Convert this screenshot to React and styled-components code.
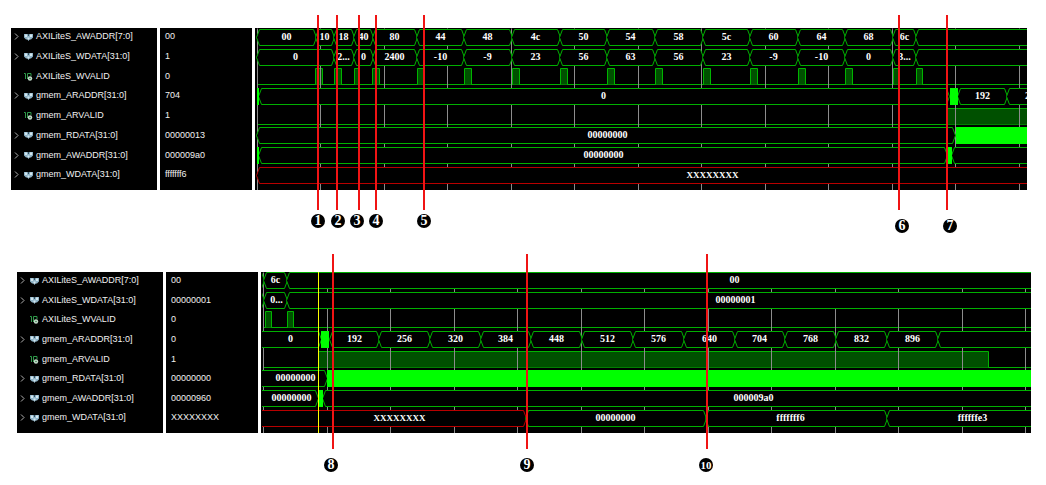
import React from "react";
import styled, { createGlobalStyle } from "styled-components";

const GlobalStyle = createGlobalStyle`
  body { margin: 0; background: #fff; }
  * { box-sizing: border-box; }
`;

const Page = styled.main`
  display: flex;
  flex-direction: column;
  gap: 82px;
  padding: 28px 0 52px;
  font-family: "Liberation Sans", Arial, sans-serif;
`;

const Viewer = styled.section`
  display: grid;
  grid-template-columns: 146px 92px 1fr;
  column-gap: 3px;
  height: ${(p) => p.$height}px;
  margin: 0 ${(p) => p.$right}px 0 ${(p) => p.$left}px;
`;

const Column = styled.ul`
  display: grid;
  grid-template-rows: repeat(8, 1fr);
  margin: 0;
  padding: 0 0 4px;
  list-style: none;
  background: #000;
  color: #f0f0f0;
  font-size: 9px;
  line-height: 17px;
  white-space: nowrap;
`;

const NameRow = styled.li`
  display: grid;
  grid-template-columns: 12px 12px 1fr;
  align-items: center;
  height: 17px;
  padding-left: 1px;
`;

const ValueRow = styled.li`
  height: 17px;
  padding-left: 5px;
`;

const Expander = styled.button`
  grid-column: 1;
  display: flex;
  justify-content: center;
  padding: 0 4px 0 0;
  border: 0;
  background: none;
`;

const Glyph = styled.span`
  grid-column: 2;
  display: flex;
`;

const Name = styled.span`
  grid-column: 3;
`;

const WavePane = styled.div`
  position: relative;
  min-width: 0;
  border-left: 1px solid #000;
  background: #000;
`;

const WaveSvg = styled.svg`
  display: block;
  width: 100%;
  height: 100%;
  font: bold 10px "Liberation Serif", "Times New Roman", serif;
  fill: #fff;
`;

const MarkerLine = styled.div`
  position: absolute;
  top: ${(p) => p.$top}px;
  left: ${(p) => p.$x}px;
  width: 2px;
  height: 195px;
  background: #f01414;
`;

const MarkerBadge = styled.span`
  position: absolute;
  top: ${(p) => p.$top}px;
  left: ${(p) => p.$x}px;
  width: 14px;
  height: 14px;
  border-radius: 50%;
  background: #000;
  color: #fff;
  font: bold ${(p) => (p.$small ? 11 : 14)}px/14px "Liberation Serif", serif;
  text-align: center;
`;

const GREEN = "#00b000";
const RED = "#b80000";
const BUS_HEIGHT = 16;

const signals = [
  { name: "AXILiteS_AWADDR[7:0]", bus: true },
  { name: "AXILiteS_WDATA[31:0]", bus: true },
  { name: "AXILiteS_WVALID" },
  { name: "gmem_ARADDR[31:0]", bus: true },
  { name: "gmem_ARVALID" },
  { name: "gmem_RDATA[31:0]", bus: true },
  { name: "gmem_AWADDR[31:0]", bus: true },
  { name: "gmem_WDATA[31:0]", bus: true },
];

const END = 4000;

/* Bus segment: [from, to, label, label centre, state] */
const steps = [160, 207, 255, 303, 350, 398, 446, 493, 541, 588, 636];
const run = (labels) => labels.map((l, i) => [steps[i], steps[i + 1], l]);

const writeTrace = {
  rowTop: 1,
  grid: [0, 63, 127, 190, 254, 317, 381, 444, 508, 571, 635, 698, 762],
  rows: [
    {
      bus: [
        [0, 59, "00"], [59, 77, "10"], [77, 97, "18"], [97, 116, "40"], [116, 160, "80"],
        ...run(["44", "48", "4c", "50", "54", "58", "5c", "60", "64", "68"]),
        [636, 659, "6c"], [659, END],
      ],
    },
    {
      bus: [
        [0, 77, "0"], [77, 97, "2..."], [97, 116, "0"], [116, 160, "2400"],
        ...run(["-10", "-9", "23", "56", "63", "56", "23", "-9", "-10", "0"]),
        [636, 659, "3..."], [659, END],
      ],
    },
    {
      pulses: [
        [58, 65], [77, 84], [97, 102], [115, 122], [160, 166],
        ...steps.slice(1, 10).map((x) => [x, x + 7]),
        [636, 641], [659, 665],
      ],
    },
    { bus: [[2, 692, "0", 347], [701, 750, "192"], [750, 801, "256"]], solid: [[0, 2], [693, 701]] },
    { pulses: [[690, END]] },
    { bus: [[0, 698, "00000000", 351]], solid: [[699, END]] },
    { bus: [[2, 690, "00000000", 347], [695, END]], solid: [[0, 2], [690, 695]] },
    { bus: [[0, END, "XXXXXXXX", 456, "unknown"]] },
  ],
};

const readTrace = {
  rowTop: 0,
  cursor: 55,
  grid: [0, 64, 127, 191, 254, 318, 381, 445, 508, 572, 635, 699, 762],
  rows: [
    { bus: [[-20, 1], [1, 24, "6c"], [24, END, "00", 472]] },
    { bus: [[-20, 1], [1, 24, "0...", 14], [24, END, "00000001", 473]] },
    { pulses: [[2, 8], [24, 30]] },
    {
      bus: [
        [-20, 58, "0", 28], [67, 116, "192"], [116, 167, "256"], [167, 218, "320"],
        [218, 268, "384"], [268, 319, "448"], [319, 370, "512"], [370, 421, "576"],
        [421, 472, "640"], [472, 522, "704"], [522, 573, "768"], [573, 624, "832"],
        [624, 675, "896"], [675, END],
      ],
      solid: [[58, 66]],
    },
    { pulses: [[55, 725]] },
    { bus: [[-20, 64, "00000000", 33]], solid: [[64, END]] },
    { bus: [[-20, 55, "00000000", 29], [60, END, "000009a0", 491]], solid: [[55, 60]] },
    {
      bus: [
        [-20, 263, "XXXXXXXX", 137, "unknown"], [263, 443, "00000000"],
        [443, 624, "fffffff6", 528], [624, END, "ffffffe3", 710],
      ],
    },
  ],
};

const writeMarkers = [
  { n: 1, x: 317, badge: 311, y: 214 },
  { n: 2, x: 336, badge: 331, y: 214 },
  { n: 3, x: 358, badge: 350, y: 214 },
  { n: 4, x: 375, badge: 369, y: 214 },
  { n: 5, x: 423, badge: 417, y: 214 },
  { n: 6, x: 898, badge: 895, y: 219 },
  { n: 7, x: 946, badge: 943, y: 219 },
];

const readMarkers = [
  { n: 8, x: 332, badge: 324, y: 458 },
  { n: 9, x: 526, badge: 520, y: 458 },
  { n: 10, x: 706, badge: 699, y: 458 },
];

function BusSegment({ segment, y }) {
  const [from, to, label, centre, state] = segment;
  const mid = y + BUS_HEIGHT / 2;
  const bottom = y + BUS_HEIGHT;
  const d = `M${from - 1} ${mid} L${from + 2} ${y} H${to - 3} L${to} ${mid} L${to - 3} ${bottom} H${from + 2} Z`;
  return (
    <g>
      <path d={d} fill="#000" stroke={state === "unknown" ? RED : GREEN} />
      {label && (
        <text
          x={(centre ?? Math.round((from + to) / 2)) - 1}
          y={mid + 2}
          textAnchor="middle"
          fontSize={state === "unknown" ? 9 : 10}
        >
          {label}
        </text>
      )}
    </g>
  );
}

function Pulse({ from, to, y }) {
  const bottom = y + BUS_HEIGHT;
  return (
    <g>
      <rect x={from} y={y} width={to - from} height={BUS_HEIGHT} fill="#005000" />
      <path d={`M${from} ${bottom} V${y} H${to} V${bottom}`} fill="none" stroke="#00b400" />
    </g>
  );
}

function Waves({ trace }) {
  const rowY = (i) => trace.rowTop + Math.round((i * 59) / 3);
  return (
    <WaveSvg aria-label="Waveforms">
      <g transform="translate(1.5 0.5)">
        {trace.rows.map((row, i) =>
          row.pulses ? (
            <g key={i}>
              <path d={`M0 ${rowY(i) + BUS_HEIGHT} H${END}`} stroke={GREEN} />
              {row.pulses.map(([a, b]) => (
                <Pulse key={a} from={a} to={b} y={rowY(i)} />
              ))}
            </g>
          ) : null
        )}
        {trace.grid.map((x) => (
          <path key={x} d={`M${x} 0 V200`} stroke="#8c8c8c" />
        ))}
        {trace.rows.map((row, i) =>
          row.bus ? (
            <g key={i}>
              {row.bus.map((s) => (
                <BusSegment key={s[0]} segment={s} y={rowY(i)} />
              ))}
              {(row.solid || []).map(([a, b]) => (
                <rect key={a} x={a - 0.5} y={rowY(i) - 0.5} width={b - a} height={BUS_HEIGHT + 1} fill="#00ff00" />
              ))}
            </g>
          ) : null
        )}
        {trace.cursor && <path d={`M${trace.cursor} -1 V200`} stroke="#ffff00" />}
      </g>
    </WaveSvg>
  );
}

function BusIcon() {
  return (
    <svg width="9" height="8" viewBox="0 0 9 8" aria-hidden="true">
      <path d="M0 1h3.5l1 1 1-1H9v3.5L7 6.5H5.5L4.5 8 3.5 6.5H2L0 4.5z" fill="#8fb4c8" />
      <path d="M1 1.5h2v2.5H1zM6 1.5h2v2.5H6zM3.5 4.5h2v2h-2z" fill="#d4e6ee" />
      <path d="M4 1h1v2H4z" fill="#34505e" />
    </svg>
  );
}

function BitIcon() {
  return (
    <svg width="9" height="9" viewBox="0 0 9 9" aria-hidden="true">
      <path d="M0 1.5h1.5V7M3.5 7V1.5H7V4" fill="none" stroke="#2f9a4a" />
      <circle cx="6" cy="6.5" r="2.2" fill="#c4dccb" />
      <circle cx="6" cy="6.5" r="0.8" fill="#3f7f52" />
    </svg>
  );
}

function Chevron() {
  return (
    <svg width="5" height="7" viewBox="0 0 5 7" aria-hidden="true">
      <path d="M1 .5 4 3.5 1 6.5" fill="none" stroke="#b0b0b0" />
    </svg>
  );
}

function WaveViewer({ values, trace, markers, left, right, top, height, markerTop }) {
  const originX = left + 245;
  return (
    <Viewer $left={left} $right={right} $height={height}>
      <Column>
        {signals.map((s) => (
          <NameRow key={s.name}>
            {s.bus && (
              <Expander type="button" aria-label={`Expand ${s.name}`}>
                <Chevron />
              </Expander>
            )}
            <Glyph>{s.bus ? <BusIcon /> : <BitIcon />}</Glyph>
            <Name>{s.name}</Name>
          </NameRow>
        ))}
      </Column>
      <Column>
        {values.map((v, i) => (
          <ValueRow key={i}>{v}</ValueRow>
        ))}
      </Column>
      <WavePane>
        <Waves trace={trace} />
        {markers.map((m) => (
          <React.Fragment key={m.n}>
            <MarkerLine $x={m.x - originX} $top={markerTop} />
            <MarkerBadge $x={m.badge - originX} $top={m.y - top} $small={m.n > 9}>
              {m.n}
            </MarkerBadge>
          </React.Fragment>
        ))}
      </WavePane>
    </Viewer>
  );
}

export default function App() {
  return (
    <>
      <GlobalStyle />
      <Page>
        <WaveViewer
          left={11}
          right={19}
          top={28}
          height={162}
          markerTop={-13}
          values={["00", "1", "0", "704", "1", "00000013", "000009a0", "fffffff6"]}
          trace={writeTrace}
          markers={writeMarkers}
        />
        <WaveViewer
          left={17}
          right={15}
          top={272}
          height={161}
          markerTop={-18}
          values={["00", "00000001", "0", "0", "1", "00000000", "00000960", "XXXXXXXX"]}
          trace={readTrace}
          markers={readMarkers}
        />
      </Page>
    </>
  );
}
